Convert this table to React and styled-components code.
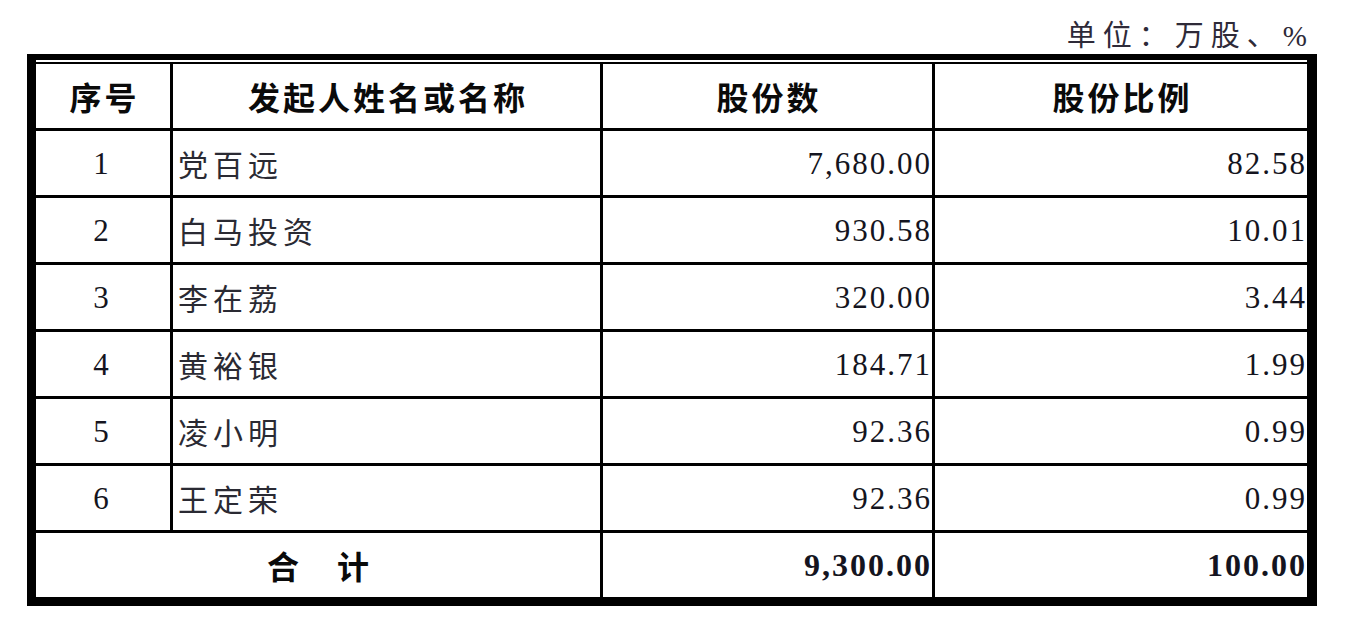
import React from 'react';
import styled, { createGlobalStyle } from 'styled-components';

const GlobalStyle = createGlobalStyle`
  html, body {
    margin: 0;
    padding: 0;
    background: #ffffff;
  }
  body {
    font-family: "Liberation Serif", "Noto Sans CJK SC", serif;
  }
`;

const Page = styled.div`
  width: 1348px;
  height: 628px;
  padding-left: 27px;
  box-sizing: border-box;
`;

const UnitLine = styled.div`
  width: 1290px;
  height: 54px;
  box-sizing: border-box;
  display: flex;
  justify-content: flex-end;
  align-items: flex-end;
  padding: 0 3px 2px 0;
  font-family: "Liberation Serif", "Noto Sans CJK SC", serif;
  font-size: 29px;
  line-height: 32px;
  letter-spacing: 7px;
  color: #2e2a38;
`;

const Frame = styled.div`
  width: 1290px;
  box-sizing: border-box;
  border-style: solid;
  border-color: #000;
  border-width: 6px 10px 9px 9px;
  padding-top: 2px;
  background: #fff;
`;

const Grid = styled.div`
  display: grid;
  grid-template-columns: 134px 427px 329px 372px;
  grid-auto-rows: 64px;
  gap: 3px;
  padding-top: 2px;
  background: #000;
`;

const Cell = styled.div`
  background: #fff;
  display: flex;
  align-items: center;
  justify-content: ${(p) =>
    p.$align === 'right' ? 'flex-end' : p.$align === 'left' ? 'flex-start' : 'center'};
  grid-column: ${(p) => (p.$span ? `span ${p.$span}` : 'auto')};
  padding: ${(p) => (p.$align === 'left' ? '0 0 0 5px' : '0')};
  box-sizing: border-box;
  overflow: hidden;
  white-space: nowrap;
`;

const HeadText = styled.span`
  font-family: "Noto Sans CJK SC", "Liberation Sans", sans-serif;
  font-weight: 700;
  font-size: 32px;
  line-height: 1;
  letter-spacing: 3px;
  padding-left: 3px;
  color: #0a0a0a;
`;

const NameText = styled.span`
  font-family: "Noto Sans CJK SC", "Liberation Sans", sans-serif;
  font-weight: 400;
  font-size: 30px;
  line-height: 1;
  letter-spacing: 5px;
  color: #2a2a33;
`;

const NumText = styled.span`
  font-family: "Liberation Serif", "Times New Roman", serif;
  font-weight: ${(p) => (p.$bold ? 700 : 400)};
  font-size: ${(p) => (p.$bold ? '32px' : '31px')};
  line-height: 1;
  letter-spacing: 2px;
  color: #141420;
`;

const IndexText = styled(NumText)`
  letter-spacing: 0;
  margin-left: -4px;
`;

const rows = [
  { id: 1, name: '党百远', shares: '7,680.00', ratio: '82.58' },
  { id: 2, name: '白马投资', shares: '930.58', ratio: '10.01' },
  { id: 3, name: '李在荔', shares: '320.00', ratio: '3.44' },
  { id: 4, name: '黄裕银', shares: '184.71', ratio: '1.99' },
  { id: 5, name: '凌小明', shares: '92.36', ratio: '0.99' },
  { id: 6, name: '王定荣', shares: '92.36', ratio: '0.99' },
];

export default function App() {
  return (
    <Page>
      <GlobalStyle />
      <UnitLine>单位：万股、%</UnitLine>
      <Frame>
        <Grid>
          <Cell><HeadText>序号</HeadText></Cell>
          <Cell><HeadText>发起人姓名或名称</HeadText></Cell>
          <Cell><HeadText>股份数</HeadText></Cell>
          <Cell><HeadText>股份比例</HeadText></Cell>

          {rows.map((r) => (
            <React.Fragment key={r.id}>
              <Cell><IndexText>{r.id}</IndexText></Cell>
              <Cell $align="left"><NameText>{r.name}</NameText></Cell>
              <Cell $align="right"><NumText>{r.shares}</NumText></Cell>
              <Cell $align="right"><NumText>{r.ratio}</NumText></Cell>
            </React.Fragment>
          ))}

          <Cell $span={2}><HeadText>合　计</HeadText></Cell>
          <Cell $align="right"><NumText $bold>9,300.00</NumText></Cell>
          <Cell $align="right"><NumText $bold>100.00</NumText></Cell>
        </Grid>
      </Frame>
    </Page>
  );
}
